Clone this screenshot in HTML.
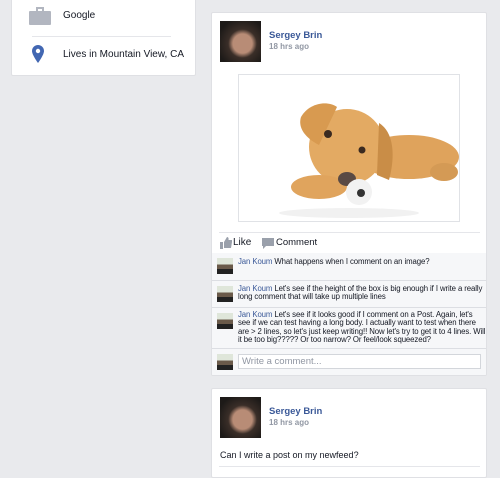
<!DOCTYPE html>
<html><head><style>
*{margin:0;padding:0;box-sizing:border-box}
body{width:500px;height:468px;background:#e9eaed;font-family:"Liberation Sans",sans-serif;position:relative;overflow:hidden;font-size:12px;color:#141823}
.card{position:absolute;background:#fff;border:1px solid #dfe0e4;border-radius:2px}
.abs{position:absolute}
.name{color:#3b5998;font-weight:bold;font-size:9.5px}
.time{color:#9197a3;font-weight:bold;font-size:8px}
.av{position:absolute;overflow:hidden;background:#3a3530}
.jk{background:linear-gradient(#dfe6da 0 40%,#6a5a4a 40% 70%,#222 70%)}
.cm{position:absolute;left:0;width:274px;font-size:7.8px;line-height:8.4px;color:#141823;letter-spacing:-0.1px}
.cm b{color:#3b5998;font-weight:normal}
.sep{position:absolute;left:0;width:274px;height:1px;background:#dcdee3}
</style></head><body>
<div class="card" style="left:11px;top:-4px;width:185px;height:80px"></div>
<div class="abs" style="left:29px;top:11px;width:22px;height:14px;background:#b2b6c0;border-radius:1px"></div>
<div class="abs" style="left:36px;top:7px;width:8px;height:5px;border:2px solid #b2b6c0;border-bottom:none"></div>
<div class="abs" style="left:63px;top:10px;font-size:10px">Google</div>
<div class="abs" style="left:32px;top:36px;width:139px;height:1px;background:#e5e6ea"></div>
<svg class="abs" style="left:32px;top:45px" width="12" height="22" viewBox="0 0 12 22"><path d="M6 0C2.7 0 0 2.6 0 6c0 4 6 12 6 12s6-8 6-12C12 2.6 9.3 0 6 0z" fill="#4267b2"/><circle cx="6" cy="6" r="2.2" fill="#fff"/></svg>
<div class="abs" style="left:63px;top:49px;font-size:10px">Lives in Mountain View, CA</div>

<div class="card" style="left:211px;top:12px;width:276px;height:364px;overflow:hidden">
 <div class="av" style="left:8px;top:8px;width:41px;height:41px;background:radial-gradient(circle at 55% 55%,#b88c76 0 30%,#3a2e28 45%,#1d1a18 80%)"></div>
 <div class="abs name" style="left:57px;top:17px">Sergey Brin</div>
 <div class="abs time" style="left:57px;top:29px">18 hrs ago</div>
 <div class="abs" style="left:26px;top:61px;width:222px;height:148px;border:1px solid #e0e2e6;background:#fff">
 <svg width="220" height="146" viewBox="0 0 220 146">
  <ellipse cx="170" cy="82" rx="50" ry="22" fill="#dfa35c"/>
  <ellipse cx="205" cy="97" rx="14" ry="9" fill="#d49a55"/>
  <ellipse cx="108" cy="72" rx="38" ry="38" fill="#e3aa63"/>
  <path d="M62 42 C70 28 88 25 98 32 L80 70 C70 65 58 55 62 42z" fill="#d89a50"/>
  <path d="M140 48 C152 55 158 75 150 105 L138 100z" fill="#c98d47"/>
  <ellipse cx="80" cy="112" rx="28" ry="12" fill="#e0a45d"/>
  <circle cx="89" cy="59" r="4" fill="#3a2a20"/>
  <circle cx="123" cy="75" r="3.5" fill="#3a2a20"/>
  <ellipse cx="108" cy="104" rx="9" ry="7" fill="#5a4a44"/>
  <circle cx="120" cy="117" r="13" fill="#f2f2f2"/>
  <circle cx="122" cy="118" r="4" fill="#333"/>
  <ellipse cx="110" cy="138" rx="70" ry="5" fill="#f1f1f1"/>
 </svg></div>
 <div class="abs" style="left:7px;top:219px;width:261px;height:1px;background:#e5e6ea"></div>
 <svg class="abs" style="left:8px;top:224px" width="12" height="12" viewBox="0 0 12 12"><path d="M0 5h3v7H0zM4 5l3-5c1 0 2 1 1.5 3H12v2l-1 6H4z" fill="#9aa0ab"/></svg>
 <div class="abs" style="left:21px;top:224px;font-size:10px">Like</div>
 <svg class="abs" style="left:50px;top:225px" width="12" height="11" viewBox="0 0 12 11"><path d="M0 0h12v8H4l-3 3V8H0z" fill="#9aa0ab"/></svg>
 <div class="abs" style="left:64px;top:224px;font-size:9.5px">Comment</div>
 <div class="abs" style="left:0;top:240px;width:276px;height:124px;background:#f6f7f9"></div>
 <div class="av jk" style="left:5px;top:245px;width:16px;height:16px"></div>
 <div class="cm" style="left:26px;top:245px;width:248px"><b>Jan Koum</b> What happens when I comment on an image?</div>
 <div class="sep" style="top:267px"></div>
 <div class="av jk" style="left:5px;top:273px;width:16px;height:16px"></div>
 <div class="cm" style="left:26px;top:272px;width:248px"><b>Jan Koum</b> Let's see if the height of the box is big enough if I write a really long comment that will take up multiple lines</div>
 <div class="sep" style="top:294px"></div>
 <div class="av jk" style="left:5px;top:300px;width:16px;height:16px"></div>
 <div class="cm" style="left:26px;top:298px;width:248px"><b>Jan Koum</b> Let's see if it looks good if I comment on a Post. Again, let's see if we can test having a long body. I actually want to test when there are &gt; 2 lines, so let's just keep writing!! Now let's try to get it to 4 lines. Will it be too big????? Or too narrow? Or feel/look squeezed?</div>
 <div class="sep" style="top:335px"></div>
 <div class="av jk" style="left:5px;top:341px;width:16px;height:16px"></div>
 <div class="abs" style="left:26px;top:341px;width:243px;height:15px;background:#fff;border:1px solid #d3d6db;font-size:9.5px;color:#9197a3;padding:1px 3px">Write a comment...</div>
</div>

<div class="card" style="left:211px;top:388px;width:276px;height:90px">
 <div class="av" style="left:8px;top:8px;width:41px;height:41px;background:radial-gradient(circle at 55% 55%,#b88c76 0 30%,#3a2e28 45%,#1d1a18 80%)"></div>
 <div class="abs name" style="left:57px;top:17px">Sergey Brin</div>
 <div class="abs time" style="left:57px;top:29px">18 hrs ago</div>
 <div class="abs" style="left:8px;top:61px;font-size:9px">Can I write a post on my newfeed?</div>
 <div class="abs" style="left:7px;top:77px;width:261px;height:1px;background:#e5e6ea"></div>
</div>
</body></html>
